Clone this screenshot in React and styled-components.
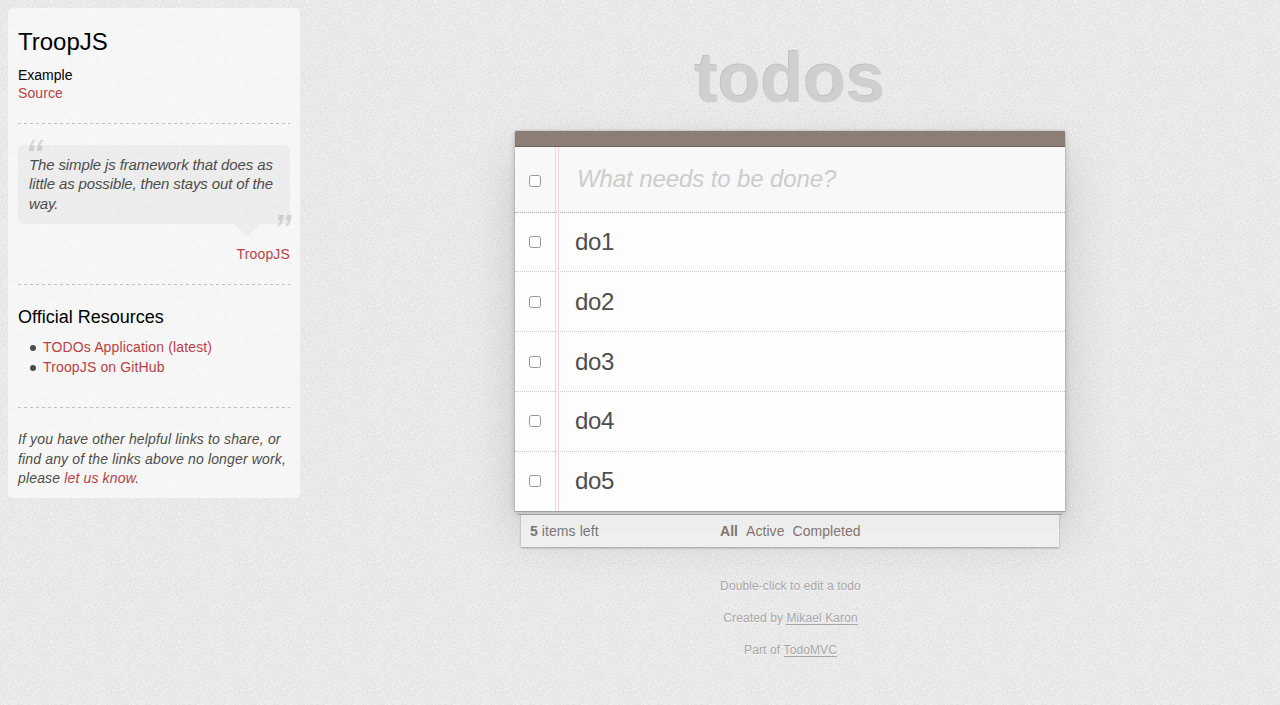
import React from 'react';
import styled, { createGlobalStyle, css } from 'styled-components';

const paper = encodeURIComponent(
  `<svg xmlns="http://www.w3.org/2000/svg" width="128" height="128"><filter id="n" x="0" y="0" width="100%" height="100%"><feTurbulence type="fractalNoise" baseFrequency=".7" numOctaves="2" stitchTiles="stitch"/><feColorMatrix values="0 0 0 0 0  0 0 0 0 0  0 0 0 0 0  .15 0 0 0 -.046"/></filter><rect width="128" height="128" filter="url(#n)"/></svg>`
);

const GlobalStyle = createGlobalStyle`
  body {
    margin: 0;
    min-height: 705px;
    font: 14px/1.4 "Liberation Sans", Arial, sans-serif;
    color: #4d4d4d;
    background: #f0f0f0 url("data:image/svg+xml,${paper}");
    overflow: hidden;
  }
  *, *::before, *::after { box-sizing: border-box; }
`;

const Page = styled.div`
  display: flex;
  align-items: flex-start;
  padding: 8px 0 0 8px;
`;

const Sidebar = styled.aside`
  width: 292px;
  height: 490px;
  flex: none;
  padding: 10px;
  border-radius: 5px;
  background: rgba(255, 255, 255, .6);
`;

const SideTitle = styled.h3`
  margin: 9px 0 0;
  font-size: 24px;
  font-weight: 400;
  line-height: 29px;
  color: #000;
`;

const SideHeading = styled.h4`
  margin: 20px 0 0;
  font-size: 18px;
  font-weight: 400;
  line-height: 24px;
  color: #000;
`;

const ExampleLabel = styled.h5`
  margin: 10px 0 0;
  font-size: 14px;
  font-weight: 400;
  line-height: 18px;
  color: #000;
`;

const RedLink = styled.a`
  color: #b83f45;
  text-decoration: none;
`;

const SourceLine = styled.div`
  line-height: 18px;
  letter-spacing: .1px;
`;

const Divider = styled.hr`
  height: 1px;
  margin: ${p => p.$top}px 0 0;
  border: 0;
  background: repeating-linear-gradient(90deg, #bfbfbf 0 3px, transparent 3px 6px);
`;

const Quote = styled.blockquote`
  position: relative;
  height: 79px;
  margin: 21px 0 0;
  padding: 10px 0 0 11px;
  border-radius: 5px;
  background: rgba(0, 0, 0, .04);
  font-size: 15px;
  font-style: italic;
  line-height: 19.4px;
  letter-spacing: -.13px;
  &::after {
    content: '';
    position: absolute;
    top: 79px;
    right: 30px;
    border: 13px solid transparent;
    border-top-color: rgba(0, 0, 0, .04);
    border-bottom: 0;
  }
`;

const QuoteMark = styled.span`
  position: absolute;
  height: 14px;
  font-size: 38px;
  font-weight: 700;
  line-height: 36px;
  letter-spacing: 0;
  color: rgba(0, 0, 0, .12);
  ${p => p.$close ? css`right: -2px; top: 66px;` : css`left: 7px; top: -9px;`}
`;

const Attribution = styled.div`
  margin-top: 20px;
  text-align: right;
  line-height: 20px;
  letter-spacing: .15px;
`;

const Resources = styled.ul`
  margin: 8px 0 0;
  padding: 0;
  list-style: none;
  line-height: 20px;
  letter-spacing: .14px;
`;

const Resource = styled.li`
  display: flex;
  align-items: center;
  gap: 7px;
  padding-left: 12px;
  &::before {
    content: '';
    width: 6px;
    height: 6px;
    margin-top: 1px;
    border-radius: 50%;
    background: #4d4d4d;
  }
`;

const Note = styled.p`
  margin: 22px 0 0;
  font-style: italic;
  line-height: 19.6px;
  letter-spacing: .15px;
`;

const Main = styled.main`
  display: flex;
  flex-direction: column;
  align-items: center;
  width: 550px;
  margin-left: 215px;
`;

const Logo = styled.h1`
  margin: 30px 0 0;
  font-size: 70px;
  line-height: 80px;
  color: #cfcfcf;
  text-shadow: -1px -1px rgba(0, 0, 0, .17);
`;

const TodoCard = styled.section`
  position: relative;
  width: 550px;
  height: 380px;
  margin-top: 13px;
  border-radius: 2px 2px 0 0;
  background: rgba(255, 255, 255, .9);
  box-shadow: 0 0 0 1px rgba(0, 0, 0, .07), 0 2px 6px rgba(0, 0, 0, .2), 0 25px 50px rgba(0, 0, 0, .15);
  &::before {
    content: '';
    position: absolute;
    z-index: 2;
    top: 16px;
    bottom: 0;
    left: 40px;
    width: 4px;
    border: 1px solid #f5d6d6;
    border-width: 0 1px;
  }
`;

const TopBar = styled.div`
  height: 16px;
  border-bottom: 1px solid #6c615c;
  border-radius: 1px 1px 0 0;
  background: #8d7d77;
`;

const Row = styled.div`
  display: flex;
  align-items: center;
  height: 59.8px;
  border-bottom: 1px dotted #ccc;
  &:last-child {
    height: 59px;
    border-bottom: 0;
  }
`;

const NewTodoRow = styled(Row)`
  height: 66px;
  border-bottom: 1px dotted #adadad;
  background: #f8f8f8;
`;

const TodoList = styled.div`
  margin-top: -.4px;
`;

const Check = styled.input`
  appearance: none;
  width: 12px;
  height: 12px;
  margin: ${p => p.$drop || 0}px 34px 0 14px;
  border: 1px solid #999793;
  border-radius: 2.5px;
  background: #fff;
`;

const TodoText = styled.label`
  margin-top: .8px;
  font-size: 24px;
  line-height: 28.8px;
  letter-spacing: -.4px;
`;

const Prompt = styled(TodoText)`
  padding-left: 2px;
  margin-top: -1px;
  font-style: italic;
  letter-spacing: -.1px;
  color: #ccc;
`;

const FooterBar = styled.footer`
  position: relative;
  display: grid;
  grid-template-columns: 190px 1fr;
  width: 538px;
  height: 32px;
  padding: 6px 9px 0;
  line-height: 20px;
  letter-spacing: .08px;
  color: #777;
  background: linear-gradient(#ececec, #f0f0f0);
  box-shadow: 0 1px 2px rgba(0, 0, 0, .3);
`;

const StackEdge = styled.div`
  position: relative;
  height: ${p => p.$height}px;
  width: ${p => p.$width}px;
  background: #c6c8c7;
  border: 0 solid #a0a2a1;
  border-width: ${p => p.$lines};
`;

const Filters = styled.div`
  display: flex;
  gap: 8px;
  letter-spacing: .05px;
  color: #83756f;
`;

const Info = styled.div`
  margin-top: 31px;
  text-align: center;
  font-size: 12px;
  line-height: 16px;
  letter-spacing: .1px;
  color: #a6a6a6;
  text-shadow: 0 1px 0 rgba(255, 255, 255, .7);
`;

const InfoLine = styled.p`
  margin: 0 0 16px 1px;
`;

const InfoLink = styled.a`
  display: inline-block;
  height: 15px;
  line-height: 16px;
  border-bottom: 1px solid #a6a6a6;
`;

const todos = ['do1', 'do2', 'do3', 'do4', 'do5'];

export default function App() {
  return (
    <>
      <GlobalStyle />
      <Page>
        <Sidebar>
          <SideTitle>TroopJS</SideTitle>
          <ExampleLabel>Example</ExampleLabel>
          <SourceLine><RedLink>Source</RedLink></SourceLine>
          <Divider $top={21} />
          <Quote>
            <QuoteMark>“</QuoteMark>
            The simple js framework that does as little as possible, then stays out of the way.
            <QuoteMark $close>”</QuoteMark>
          </Quote>
          <Attribution><RedLink>TroopJS</RedLink></Attribution>
          <Divider $top={20} />
          <SideHeading>Official Resources</SideHeading>
          <Resources>
            <Resource><RedLink>TODOs Application (latest)</RedLink></Resource>
            <Resource><RedLink>TroopJS on GitHub</RedLink></Resource>
          </Resources>
          <Divider $top={30} />
          <Note>
            If you have other helpful links to share, or find any of the links above no longer work, please <RedLink>let us know</RedLink>.
          </Note>
        </Sidebar>
        <Main>
          <Logo>todos</Logo>
          <TodoCard>
            <TopBar />
            <NewTodoRow>
              <Check type="checkbox" $drop={3} />
              <Prompt>What needs to be done?</Prompt>
            </NewTodoRow>
            <TodoList>
              {todos.map(t => (
                <Row key={t}>
                  <Check type="checkbox" />
                  <TodoText>{t}</TodoText>
                </Row>
              ))}
            </TodoList>
          </TodoCard>
          <StackEdge $width={550} $height={1} $lines="1px 0 0" />
          <StackEdge $width={544} $height={3} $lines="0 0 1px" />
          <FooterBar>
            <span><strong>5</strong> items left</span>
            <Filters><strong>All</strong><span>Active</span><span>Completed</span></Filters>
          </FooterBar>
          <Info>
            <InfoLine>Double-click to edit a todo</InfoLine>
            <InfoLine>Created by <InfoLink>Mikael Karon</InfoLink></InfoLine>
            <InfoLine>Part of <InfoLink>TodoMVC</InfoLink></InfoLine>
          </Info>
        </Main>
      </Page>
    </>
  );
}
